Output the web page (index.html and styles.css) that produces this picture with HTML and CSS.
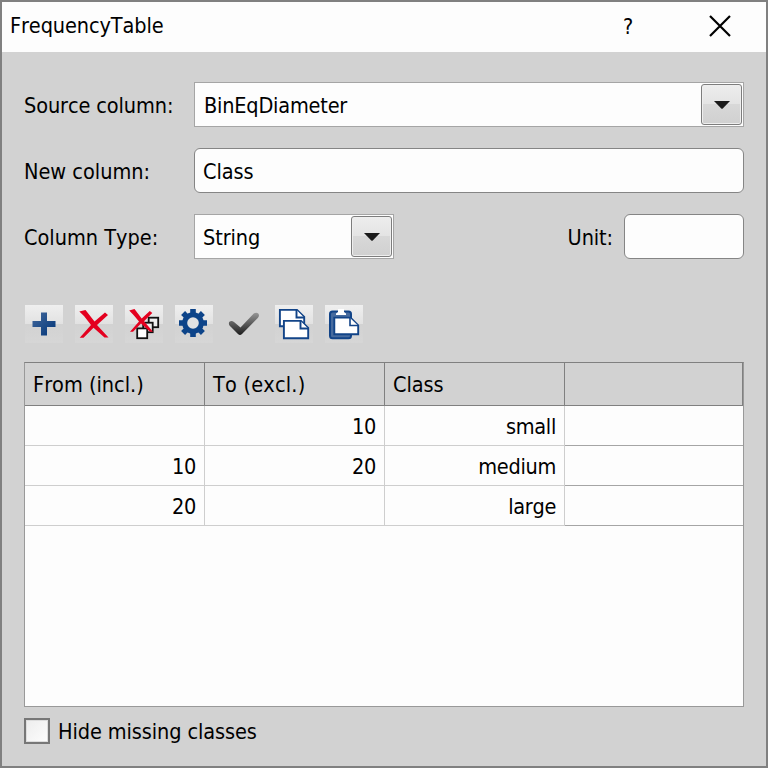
FILE: index.html
```html
<!DOCTYPE html>
<html lang="en">
<head>
<meta charset="utf-8">
<title>FrequencyTable</title>
<link rel="stylesheet" href="styles.css">
</head>
<body>
<main class="dialog">
  <header class="titlebar">
    <span class="title">FrequencyTable</span>
    <span class="help">?</span>
    <svg class="close" width="24" height="24" viewBox="0 0 24 24"><path d="M2 2 22 22M22 2 2 22"/></svg>
  </header>
  <section class="content">
    <div class="row">
      <span class="label source">Source column:</span>
      <div class="select wide"><span class="value bin">BinEqDiameter</span><span class="drop"><svg width="16" height="8" viewBox="0 0 16 8"><path d="M0 0H16L8.500 7.800H7.500Z"/></svg></span></div>
    </div>
    <div class="row">
      <span class="label newcol">New column:</span>
      <div class="input wide"><span class="class-text">Class</span></div>
    </div>
    <div class="row">
      <span class="label coltype">Column Type:</span>
      <div class="select"><span class="value string">String</span><span class="drop"><svg width="16" height="8" viewBox="0 0 16 8"><path d="M0 0H16L8.500 7.800H7.500Z"/></svg></span></div>
      <span class="unit">Unit:</span>
      <div class="input small"></div>
    </div>
    <div class="toolbar">
      <svg class="tool" viewBox="25 305 38 38">
        <defs><linearGradient id="plus" x1="0" y1="0" x2="1" y2="1"><stop offset="0" stop-color="#44699c"/><stop offset="1" stop-color="#003478"/></linearGradient></defs>
        <path fill="url(#plus)" d="M41 312.500h6V321h8.500v6H47v8.500h-6V327h-8.500v-6H41Z"/>
      </svg>
      <svg class="tool" viewBox="75 305 38 38">
        <path fill="#e4001f" d="M79.300 311.500 85.500 310 94.500 321.500 105 312.500 108 315 97 325 108.500 337.500H104.500L93.500 327.700 83.500 337.700H79.700L91 325 84 316Z"/>
      </svg>
      <svg class="tool" viewBox="125 305 38 38">
        <g fill="#eee" stroke="#111" stroke-width="1.800"><rect x="148.700" y="317.700" width="9.500" height="9.500"/><rect x="143.200" y="322.700" width="9.500" height="9.500"/><rect x="137.200" y="328.400" width="10" height="9.800" fill="#fff"/></g>
        <path fill="#e4001f" d="M129.200 310.500 134.500 309 141.700 318.500 149.800 311 152.300 313 144 321.300 153 331.700H150L141 323.500 133 331.800H130L139 321.500 133.500 315Z"/>
      </svg>
      <svg class="tool" viewBox="175 305 38 38">
        <g fill="#0d4489"><circle cx="193" cy="323" r="10.800"/><g id="teeth"><path d="M190.200 314V309H195.800V314ZM190.200 332V337H195.800V332ZM184 320.200H179V325.800H184ZM202 320.200H207V325.800H202Z"/></g><use href="#teeth" transform="rotate(45 193 323)"/></g>
        <circle cx="193" cy="323" r="5.800" fill="#e2e2e2"/>
      </svg>
      <svg class="tool flat" viewBox="225 305 38 38">
        <defs><linearGradient id="check" x1="0" y1="0" x2="0" y2="1"><stop offset="0" stop-color="#969696"/><stop offset="1" stop-color="#1d1d1d"/></linearGradient></defs>
        <path fill="url(#check)" d="M229.400 321.800Q231.500 320 234 322L240.500 327.500 253.500 313.800Q256 312 258.300 313.500Q259.800 315.500 258 317.700L242 334Q240 336 238 334L229.500 325.500Q228.300 323.500 229.400 321.800Z"/>
      </svg>
      <svg class="tool" viewBox="275 305 38 38">
        <g fill="#fff" stroke="#124488" stroke-width="1.900"><path d="M279.900 309.900H297L304.200 317V326.300H279.900Z"/><path d="M296.500 310V317.500H304"/><path d="M283.900 320.900H301L308.200 328V338.200H283.900Z"/><path d="M300.500 321V328.500H308"/></g>
      </svg>
      <svg class="tool" viewBox="325 305 38 38">
        <rect x="330" y="311.600" width="21" height="26.600" rx="2.500" fill="#476b9e" stroke="#124488" stroke-width="2"/>
        <path fill="#fff" d="M338 309H344V312L346 313.500V315H336V313.500L338 312Z"/>
        <path fill="#fff" stroke="#124488" stroke-width="1.900" d="M334.300 317.600H350.500L358.200 325.500V334.300H334.300Z"/>
        <path fill="#fff" stroke="#124488" stroke-width="1.600" d="M350 318V325.500H358"/>
      </svg>
    </div>
    <div class="table">
      <div class="tr head"><span><b class="t-from">From (incl.)</b></span><span><b class="t-to">To (excl.)</b></span><span><b class="class-text">Class</b></span><span></span></div>
      <div class="tr"><span></span><span>10</span><span>small</span><span></span></div>
      <div class="tr"><span>10</span><span>20</span><span>medium</span><span></span></div>
      <div class="tr"><span>20</span><span></span><span>large</span><span></span></div>
    </div>
    <label class="check"><i class="box"></i><span class="hide">Hide missing classes</span></label>
  </section>
</main>
</body>
</html>
```
FILE: styles.css
```css
* { box-sizing: border-box; }
body { margin: 0; }
.dialog {
  width: 768px;
  height: 768px;
  border: 2px solid #808080;
  background: #d2d2d2;
  color: #000;
  font: 21.5px/26px "DejaVu Sans Condensed", "DejaVu Sans", sans-serif;
  font-stretch: condensed;
  font-kerning: none;
  letter-spacing: -0.1px;
  white-space: nowrap;
  overflow: hidden;
}
.titlebar {
  height: 50px;
  display: flex;
  align-items: center;
  background: #fdfdfd;
  padding: 0 34px 2px 8px;
}
.help { margin-left: auto; width: 12px; margin-right: 73px; padding-top: 1px; }
.close { fill: none; stroke: #000; stroke-width: 2.2; }
.content { padding: 30px 22px 0; }
.row { display: flex; align-items: center; height: 45px; margin-bottom: 21px; }
.label { width: 170px; flex: none; padding-top: 2px; }
.newcol, .coltype { letter-spacing: 0; }
.value, .input .class-text { padding-top: 2px; }
.bin { padding-left: 1px; }
.select {
  width: 200px;
  height: 45px;
  display: flex;
  align-items: center;
  justify-content: space-between;
  border: 1px solid #a5a5a5;
  background: #fdfdfd;
  padding: 0 1px 0 8px;
}
.bin { letter-spacing: -0.2px; }
.class-text, .string { letter-spacing: -0.1px; }
.drop {
  width: 41px;
  height: 41px;
  display: flex;
  align-items: center;
  justify-content: center;
  border: 1px solid #7d7d7d;
  border-radius: 3px;
  background: linear-gradient(#ededed, #e4e4e4 48%, #d8d8d8 50%, #d0d0d0);
  box-shadow: inset 0 0 0 1px #eee;
}
.drop svg { fill: #1a1a1a; }
.input {
  height: 45px;
  display: flex;
  align-items: center;
  border: 1px solid #858585;
  border-radius: 6px;
  background: #fdfdfd;
  padding-left: 8px;
}
.select.wide, .input.wide { width: 550px; }
.input.small { width: 120px; }
.unit { margin-left: auto; margin-right: 11px; padding-top: 2px; }
.toolbar { display: flex; gap: 12px; padding: 25px 0 0 1px; }
.tool {
  width: 38px;
  height: 38px;
  background: linear-gradient(#efefef, #e2e2e2 49%, #d2d2d2 50%, #d6d6d6);
}
.tool.flat { background: none; }
.table {
  height: 345px;
  margin-top: 19px;
  border: 1px solid #999;
  border-top-color: #808080;
  background: #fdfdfd;
}
.tr {
  display: grid;
  grid-template-columns: 180px 180px 180px 1fr;
  grid-template-rows: 100%;
  height: 40px;
  text-align: right;
  letter-spacing: -0.3px;
}
.tr span { border: solid #cecece; border-width: 0 1px 1px 0; padding: 2px 8px 0; line-height: 37px; }
.tr span:last-child { border-right: 0; border-bottom-color: #a5a5a5; }
.tr.head { height: 43px; text-align: left; letter-spacing: 0; background: #d2d2d2; }
.tr.head span { line-height: 42px; padding-top: 1px; border-color: #808080; }
.tr.head span:last-child { border-right: 1px solid #808080; }
.head b { font-weight: normal; }
.head .t-to { letter-spacing: 0.2px; }
.check { display: flex; align-items: center; height: 26px; margin-top: 11px; gap: 8px; }
.hide { padding-top: 1px; }
.box {
  width: 26px;
  height: 26px;
  border: 2px solid #777;
  background: linear-gradient(135deg, #ededed, #fdfdfd);
  box-shadow: inset 0 0 0 1px #ddd;
}
```
